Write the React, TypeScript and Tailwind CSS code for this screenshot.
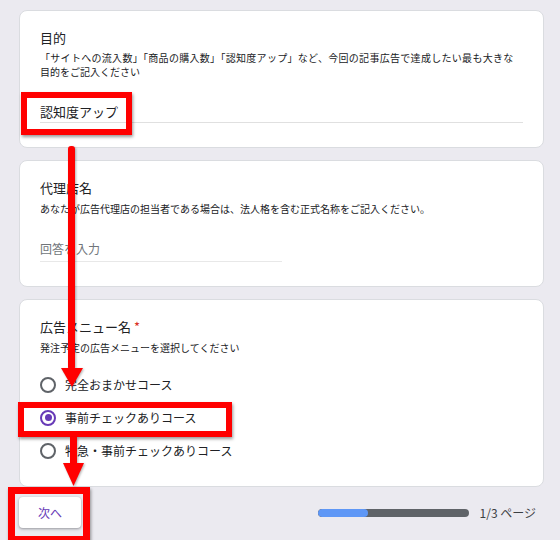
import React from 'react';

function Radio({ checked }: { checked?: boolean }) {
  return (
    <span
      className={`grid h-[16px] w-[16px] shrink-0 place-items-center rounded-full border-2 ${
        checked ? 'border-[#673ab7]' : 'border-[#5f6368]'
      }`}
    >
      {checked && <span className="h-[7px] w-[7px] rounded-full bg-[#673ab7]" />}
    </span>
  );
}

function Card({ children, className = '' }: { children: React.ReactNode; className?: string }) {
  return (
    <section className={`rounded-lg border border-[#dadce0] bg-white px-[20px] pt-[17px] ${className}`}>
      {children}
    </section>
  );
}

const options = [
  { label: '完全おまかせコース', checked: false },
  { label: '事前チェックありコース', checked: true },
  { label: '特急・事前チェックありコース', checked: false },
];

function Arrows() {
  return (
    <svg
      width="560"
      height="540"
      viewBox="0 0 560 540"
      className="pointer-events-none absolute left-0 top-0 drop-shadow-[1px_1px_1px_rgba(0,0,0,0.3)]"
      aria-hidden="true"
    >
      <rect x="68" y="146" width="7" height="224" rx="3" fill="#ff0000" />
      <polygon points="61,368 83,368 72,387" fill="#ff0000" />
      <rect x="70" y="437" width="7" height="28" fill="#ff0000" />
      <polygon points="63,463 84,463 73.5,486" fill="#ff0000" />
    </svg>
  );
}

export default function App() {
  return (
    <div className="relative h-[540px] w-[560px] overflow-hidden bg-[#ebeaf0] font-['Noto_Sans_CJK_JP',sans-serif] text-[#202124]">
      <div className="flex flex-col gap-3 pl-[19px] pr-[16px] pt-[10px]">
        <Card className="pb-[24px]">
          <h2 className="text-[13px] leading-[20px]">目的</h2>
          <p className="mt-[3px] text-[10px] leading-[14px]">
            <span className="tracking-[0.3px]">「サイトへの流入数」「商品の購入数」「認知度アップ」など、今回の記事広告で達成したい最も大きな</span>
            <br />
            目的をご記入ください
          </p>
          <div className="mt-[23px] border-b border-[#e0e0e0] text-[13px] leading-[20px]">認知度アップ</div>
        </Card>

        <Card className="pb-[24px]">
          <h2 className="text-[13px] leading-[20px]">代理店名</h2>
          <p className="mt-[4px] text-[10px] leading-[13px]">
            あなたが広告代理店の担当者である場合は、法人格を含む正式名称をご記入ください。
          </p>
          <div className="mt-[24px] w-[242px] border-b border-[#e8e8e8] pb-[2px] text-[12px] leading-[20px] text-[#70757a]">
            回答を入力
          </div>
        </Card>

        <Card className="pb-[19px]">
          <h2 className="text-[13px] leading-[20px]">
            広告メニュー名 <span className="text-[#d93025]">*</span>
          </h2>
          <p className="mt-[4px] text-[10px] leading-[13px]">発注予定の広告メニューを選択してください</p>
          <div className="mt-[14px] flex flex-col">
            {options.map((o) => (
              <div key={o.label} className="flex h-[33px] items-center gap-[9px]">
                <Radio checked={o.checked} />
                <span className="text-[12px] leading-[16px]">{o.label}</span>
              </div>
            ))}
          </div>
        </Card>

        <div className="-mt-[2px] flex items-center">
          <button
            type="button"
            className="h-[31px] w-[62px] rounded bg-white text-[12px] text-[#673ab7] shadow-[0_1px_2px_rgba(60,64,67,0.3),0_1px_3px_1px_rgba(60,64,67,0.15)]"
          >
            次へ
          </button>
          <div className="ml-auto flex items-center gap-[11px] pr-[8px]">
            <div className="h-[8px] w-[151px] overflow-hidden rounded-full bg-[#5f6368]">
              <div className="h-full w-1/3 rounded-full bg-[#5e97f6]" />
            </div>
            <span className="text-[12px] text-[#3c4043]">1/3 ページ</span>
          </div>
        </div>
      </div>

      {/* annotation overlays */}
      <div className="pointer-events-none absolute left-[21px] top-[92px] h-[43px] w-[111px] border-[6px] border-[#ff0000] shadow-[1px_2px_3px_rgba(0,0,0,0.4)]" />
      <div className="pointer-events-none absolute left-[18px] top-[402px] h-[35px] w-[214px] border-[6px] border-[#ff0000] shadow-[1px_2px_3px_rgba(0,0,0,0.4)]" />
      <div className="pointer-events-none absolute left-[8px] top-[487px] h-[56px] w-[82px] border-[7px] border-[#ff0000] shadow-[1px_2px_3px_rgba(0,0,0,0.4)]" />
      <Arrows />
    </div>
  );
}
